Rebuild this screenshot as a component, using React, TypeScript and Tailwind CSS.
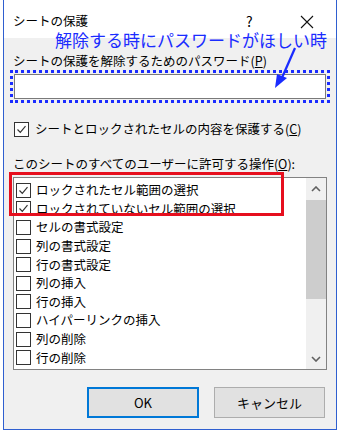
import React from "react";

const items = [
  { label: "ロックされたセル範囲の選択", checked: true },
  { label: "ロックされていないセル範囲の選択", checked: true },
  { label: "セルの書式設定", checked: false },
  { label: "列の書式設定", checked: false },
  { label: "行の書式設定", checked: false },
  { label: "列の挿入", checked: false },
  { label: "行の挿入", checked: false },
  { label: "ハイパーリンクの挿入", checked: false },
  { label: "列の削除", checked: false },
  { label: "行の削除", checked: false },
];

function CheckBox({ checked }: { checked: boolean }) {
  return (
    <div className="w-[15px] h-[15px] border border-[#333] bg-white flex items-center justify-center shrink-0">
      {checked && (
        <svg width="11" height="11" viewBox="0 0 11 11">
          <path d="M1.5 5.5 L4.3 8.3 L9.5 2.2" fill="none" stroke="#333" strokeWidth="1.2" />
        </svg>
      )}
    </div>
  );
}

export default function App() {
  return (
    <div
      className="relative w-[340px] h-[432px] bg-white pl-[3px] pr-[3px] pb-[2px] text-black"
      style={{ fontFamily: '"Noto Sans CJK JP", "Noto Sans", sans-serif' }}
    >
      <div className="h-[430px] border-x border-b border-[#2f5fd0] flex flex-col">
        {/* Title bar */}
        <div className="h-[38px] bg-white flex items-start pt-[13px] pl-[9px] text-[12.5px] leading-[16px]">
          <span>シートの保護</span>
          <span className="ml-[158px] text-[14px] leading-[14px] mt-[1px]">?</span>
          <svg className="ml-[47px] mt-[2px]" width="14" height="14" viewBox="0 0 14 14">
            <path d="M1 1 L13 13 M13 1 L1 13" stroke="#111" strokeWidth="1.1" />
          </svg>
        </div>

        {/* Body */}
        <div className="flex-1 bg-[#f0f0f0] pl-[9px] text-[12.5px] leading-[16px]">
          <div className="mt-[15px]">
            シートの保護を解除するためのパスワード(<span className="underline">P</span>)
          </div>
          <div className="mt-[1px] -ml-[3px] w-[320px] h-[33px] border-[3px] border-dotted border-[#1a2cff] p-[1px]">
            <div className="w-full h-full bg-white border border-[#7a7a7a]" />
          </div>

          <div className="mt-[18px] ml-[1px] flex items-center gap-[6px]">
            <CheckBox checked />
            <span>
              シートとロックされたセルの内容を保護する(<span className="underline">C</span>)
            </span>
          </div>

          <div className="mt-[19px]">
            このシートのすべてのユーザーに許可する操作(<span className="underline">O</span>):
          </div>

          {/* List box */}
          <div className="mt-[5px] w-[314px] h-[193px] border border-[#828282] bg-white flex">
            <div className="flex-1 pt-[3px] pl-[2px]">
              {items.map((it) => (
                <div key={it.label} className="h-[18.6px] flex items-center gap-[5px]">
                  <CheckBox checked={it.checked} />
                  <span className="whitespace-nowrap">{it.label}</span>
                </div>
              ))}
            </div>
            <div className="w-[20px] bg-[#f0f0f0] flex flex-col">
              <div className="h-[22px] flex items-center justify-center">
                <svg width="10" height="6" viewBox="0 0 10 6">
                  <path d="M1 5 L5 1 L9 5" fill="none" stroke="#606060" strokeWidth="1.6" />
                </svg>
              </div>
              <div className="h-[99px] bg-[#cdcdcd]" />
              <div className="flex-1 flex items-end justify-center pb-[7px]">
                <svg width="10" height="6" viewBox="0 0 10 6">
                  <path d="M1 1 L5 5 L9 1" fill="none" stroke="#606060" strokeWidth="1.6" />
                </svg>
              </div>
            </div>
          </div>

          {/* Buttons */}
          <div className="mt-[17px] flex gap-[15px] pl-[74px] text-[13px]">
            <div className="w-[112px] h-[31px] bg-[#e1e1e1] border-2 border-[#0078d7] flex items-center justify-center">
              OK
            </div>
            <div className="w-[111px] h-[31px] bg-[#e1e1e1] border border-[#adadad] flex items-center justify-center">
              キャンセル
            </div>
          </div>
        </div>
      </div>

      {/* Annotations */}
      <div className="absolute left-[55px] top-[30px] text-[17px] leading-[20px] text-[#1a2cff] whitespace-nowrap">
        解除する時にパスワードがほしい時
      </div>
      <svg className="absolute left-[268px] top-[46px]" width="34" height="46" viewBox="0 0 34 46">
        <path d="M27 2 L13 34" stroke="#1a2cff" strokeWidth="2.2" />
        <path d="M7 42 L9 28 L19 32 Z" fill="#1a2cff" />
      </svg>
      <div className="absolute left-[9px] top-[172px] w-[275px] h-[44px] border-[3px] border-[#e60f1e]" />
    </div>
  );
}
